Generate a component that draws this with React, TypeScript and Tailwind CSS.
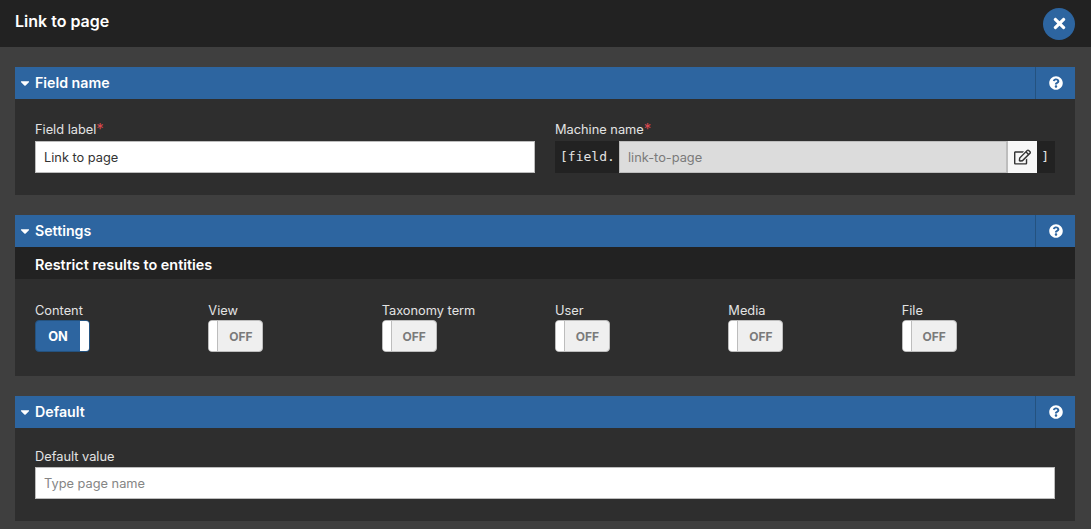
import { FaCaretDown, FaQuestionCircle, FaRegEdit, FaTimes } from "react-icons/fa";

function Bar({ title }: { title: string }) {
  return (
    <div className="flex h-8 items-center bg-[#2d65a0] text-white">
      <FaCaretDown className="ml-[4px] h-[14px] w-[12px]" />
      <span className="ml-[4px] flex-1 text-[14.2px] leading-none font-semibold">{title}</span>
      <div className="flex h-8 w-10 items-center justify-center border-l border-[#24527f]">
        <FaQuestionCircle className="h-[14px] w-[14px]" />
      </div>
    </div>
  );
}

function Label({ text, required }: { text: string; required?: boolean }) {
  return (
    <div className="h-5 text-[12.8px] leading-[18px] text-[#e3e3e3]">
      {text}
      {required && <span className="text-[15px] leading-none text-[#d9484f]">*</span>}
    </div>
  );
}

function Toggle({ label, on }: { label: string; on?: boolean }) {
  return (
    <div>
      <div className="h-5 text-[12.8px] leading-[22px] text-[#e3e3e3]">{label}</div>
      {on ? (
        <div className="flex h-8 w-[55px] overflow-hidden rounded-[4px] border border-[#24527f] bg-[#2d65a0]">
          <span className="flex-1 text-center text-[12.8px] leading-[32px] font-bold text-white">ON</span>
          <span className="w-[9px] bg-white" />
        </div>
      ) : (
        <div className="flex h-8 w-[55px] overflow-hidden rounded-[4px] border border-[#bdbdbd] bg-[#efefef]">
          <span className="w-[9px] border-r border-[#bdbdbd] bg-white" />
          <span className="flex-1 pl-[1px] text-center text-[12px] leading-[32px] font-bold text-[#7a7a7a]">OFF</span>
        </div>
      )}
    </div>
  );
}

export default function App() {
  return (
    <div className="h-[529px] w-[1091px] overflow-hidden bg-[#3f3f3f] font-['Inter',sans-serif]">
      <header className="flex h-[47px] items-center justify-between bg-[#222222] pr-4 pl-[15px]">
        <h1 className="pb-[6px] text-[16px] font-semibold text-white">Link to page</h1>
        <button className="flex h-8 w-8 items-center justify-center rounded-full bg-[#2d65a0] text-white">
          <FaTimes className="h-[17px] w-[17px]" />
        </button>
      </header>

      <main className="flex flex-col gap-5 pt-5 pr-4 pl-[15px]">
        <section className="bg-[#2e2e2e]">
          <Bar title="Field name" />
          <div className="grid grid-cols-2 gap-5 px-5 py-[22px]">
            <div>
              <Label text="Field label" required />
              <input
                readOnly
                value="Link to page"
                className="block h-8 w-full border border-[#bdbdbd] bg-white px-2 text-[12.8px] text-[#333333] outline-none"
              />
            </div>
            <div>
              <Label text="Machine name" required />
              <div className="flex h-8 bg-[#222222]">
                <span className="w-[64px] pl-[5px] font-['DejaVu_Sans_Mono',monospace] text-[13px] leading-8 text-[#e3e3e3]">[field.</span>
                <input
                  readOnly
                  value="link-to-page"
                  className="h-8 min-w-0 flex-1 border border-[#bdbdbd] bg-[#dcdcdc] px-2 text-[12.8px] text-[#7a7a7a] outline-none"
                />
                <div className="flex h-8 w-[30px] items-center justify-center border-l border-[#bdbdbd] bg-[#f7f7f7] text-[#333333]">
                  <FaRegEdit className="h-[16px] w-[17px]" />
                </div>
                <span className="w-[18px] pr-[6px] text-right font-['DejaVu_Sans_Mono',monospace] text-[13px] leading-8 text-[#e3e3e3]">]</span>
              </div>
            </div>
          </div>
        </section>

        <section className="bg-[#2e2e2e]">
          <Bar title="Settings" />
          <div className="flex h-8 items-center bg-[#222222] px-5 pt-[3px] text-[14.4px] font-semibold text-white">
            Restrict results to entities
          </div>
          <div className="grid grid-cols-6 gap-5 px-5 pt-[21px] pb-6">
            <Toggle label="Content" on />
            <Toggle label="View" />
            <Toggle label="Taxonomy term" />
            <Toggle label="User" />
            <Toggle label="Media" />
            <Toggle label="File" />
          </div>
        </section>

        <section className="bg-[#2e2e2e]">
          <Bar title="Default" />
          <div className="px-5 pt-5 pb-[22px]">
            <div className="h-[19px] text-[12.8px] leading-[18px] text-[#e3e3e3]">Default value</div>
            <input
              placeholder="Type page name"
              className="block h-8 w-full border border-[#bdbdbd] bg-white px-2 text-[12.8px] text-[#333333] outline-none placeholder:text-[#858585]"
            />
          </div>
        </section>
      </main>
    </div>
  );
}
